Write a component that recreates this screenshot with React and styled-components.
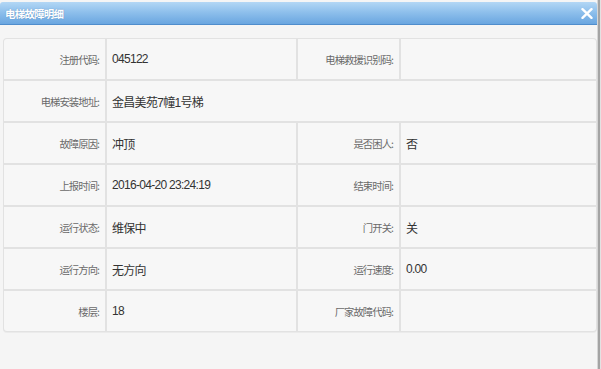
import React from "react";
import styled, { createGlobalStyle } from "styled-components";

const Global = createGlobalStyle`
  html, body { margin: 0; padding: 0; background: #f5f5f5; }
  body { font-family: "Liberation Sans", "Noto Sans CJK SC", sans-serif; }
`;

const Frame = styled.div`
  display: flex;
  width: 601px;
  height: 369px;
  background: #f5f5f5;
  overflow: hidden;
`;

const Dialog = styled.div`
  width: 597px;
  display: flex;
  flex-direction: column;
  padding-top: 2px;
`;

const EdgeBar = styled.div`
  width: 4px;
  background: linear-gradient(to right, #d6d6d6 0, #d6d6d6 1px, #a4a4a4 1px, #a4a4a4 3px, #e2e2e2 3px);
`;

const Header = styled.div`
  height: 22px;
  display: flex;
  align-items: center;
  justify-content: space-between;
  padding: 0 4px 0 5px;
  border-radius: 3px 3px 0 0;
  background: linear-gradient(to bottom, #b3d7f5 0%, #8fc0ec 45%, #6aa6e0 100%);
  border-bottom: 1px solid #4f8dcc;
`;

const Title = styled.span`
  color: #ffffff;
  font-family: "Noto Sans CJK SC", sans-serif;
  font-size: 10.5px;
  font-weight: 700;
  letter-spacing: -0.8px;
  text-shadow: 0 0 1px rgba(40, 90, 150, 0.6);
`;

const Close = styled.svg`
  width: 12px;
  height: 11px;
  margin-top: 1px;
`;

const Body = styled.div`
  padding: 13px 0 0 3px;
`;

const Table = styled.div`
  width: 592px;
  display: grid;
  grid-template-columns: 101px 189px 101px 1fr;
  grid-auto-rows: 40px;
  gap: 2px;
  padding: 1px;
  background: #e2e2e2;
  border-radius: 4px;
  box-shadow: 0 1px 0 #ebebeb;
`;

const Label = styled.div`
  background: #f7f7f7;
  display: flex;
  align-items: center;
  justify-content: flex-end;
  padding-right: 6px;
  color: #6a6a6a;
  font-family: "Noto Sans CJK SC", sans-serif;
  font-size: 10.3px;
  letter-spacing: -0.9px;
  border-radius: ${(p) => p.$radius || "0"};
`;

const Value = styled.div`
  background: #f7f7f7;
  display: flex;
  align-items: center;
  padding-left: 5px;
  color: #333;
  font-family: "Liberation Sans", "Noto Sans CJK SC", sans-serif;
  font-size: 12px;
  letter-spacing: -0.7px;
  grid-column: ${(p) => (p.$span ? `span ${p.$span}` : "auto")};
  border-radius: ${(p) => p.$radius || "0"};
`;

const rows = [
  [["注册代码:", "045122"], ["电梯救援识别码:", ""]],
  [["电梯安装地址:", "金昌美苑7幢1号梯"]],
  [["故障原因:", "冲顶"], ["是否困人:", "否"]],
  [["上报时间:", "2016-04-20 23:24:19"], ["结束时间:", ""]],
  [["运行状态:", "维保中"], ["门开关:", "关"]],
  [["运行方向:", "无方向"], ["运行速度:", "0.00"]],
  [["楼层:", "18"], ["厂家故障代码:", ""]],
];

export default function App() {
  return (
    <>
      <Global />
      <Frame>
        <Dialog>
          <Header>
            <Title>电梯故障明细</Title>
            <Close viewBox="0 0 12 11">
              <path d="M1.5 1.2 L10.5 9.8 M10.5 1.2 L1.5 9.8" stroke="#ffffff" strokeWidth="2.4" strokeLinecap="round" />
            </Close>
          </Header>
          <Body>
            <Table>
              {rows.map((row, ri) =>
                row.map(([l, v], ci) => {
                  const first = ri === 0;
                  const last = ri === rows.length - 1;
                  return (
                    <React.Fragment key={`${ri}-${ci}`}>
                      <Label $radius={ci === 0 ? (first ? "3px 0 0 0" : last ? "0 0 0 3px" : "0") : "0"}>{l}</Label>
                      <Value
                        $span={row.length === 1 ? 3 : 0}
                        $radius={ci === row.length - 1 && row.length === 2 ? (first ? "0 3px 0 0" : last ? "0 0 3px 0" : "0") : "0"}
                      >
                        {v}
                      </Value>
                    </React.Fragment>
                  );
                })
              )}
            </Table>
          </Body>
        </Dialog>
        <EdgeBar />
      </Frame>
    </>
  );
}
